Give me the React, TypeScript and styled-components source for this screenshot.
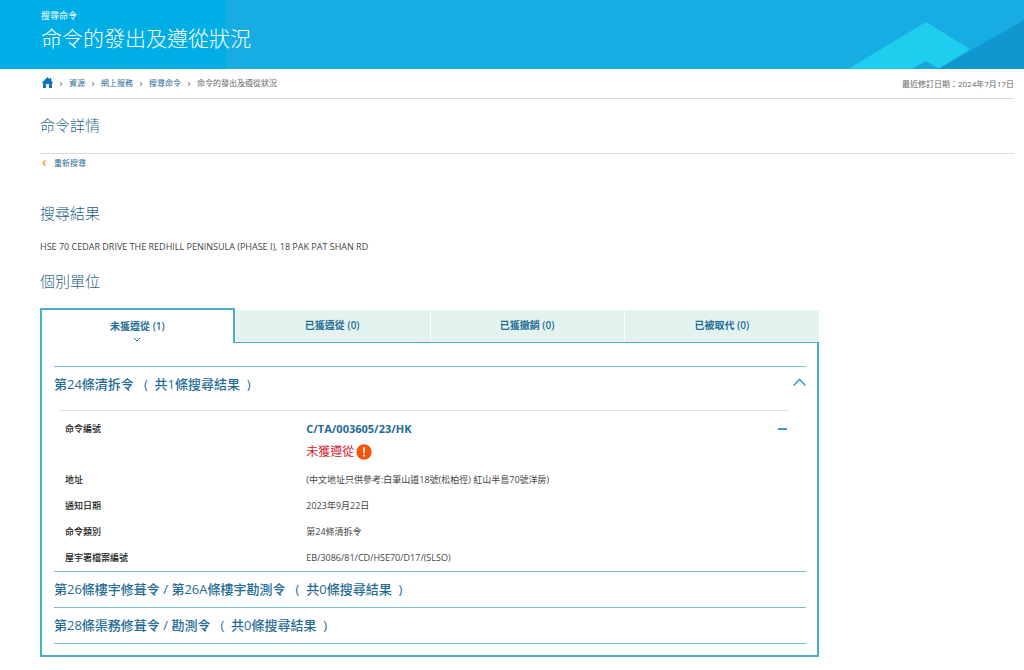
import React, { useState } from "react";
import styled, { createGlobalStyle } from "styled-components";

const latin = '"Open Sans", "Noto Sans CJK TC", sans-serif';

const c = {
  link: "#1f6c96",
  heading: "#1f6486",
  border: "#4aaec8",
  rule: "#d9d9d9",
  text: "#444444",
};

const GlobalStyle = createGlobalStyle`
  *, *::before, *::after { box-sizing: border-box; }
  body {
    margin: 0;
    background: #fff;
    color: ${c.text};
    font: 8px/14px ${latin};
  }
  h1, h2, h3, p, dl, dd, ol { margin: 0; padding: 0; font-weight: inherit; }
  a { color: ${c.link}; text-decoration: none; }
  button { border: 0; padding: 0; background: none; font: inherit; color: inherit; cursor: pointer; }
  svg { display: block; }
`;

const Banner = styled.header`
  position: relative;
  height: 69px;
  padding: 9px 0 0 41px;
  color: #fff;
  background: linear-gradient(90deg, #00aee6 226px, #17ade3 226px);
  overflow: hidden;
`;

const BannerArt = styled.svg`
  position: absolute;
  right: 0;
  bottom: 0;
`;

const Section = styled.p`
  position: relative;
  font-size: 9px;
  line-height: 14px;
`;

const Title = styled.h1`
  position: relative;
  font-size: 21px;
  line-height: 30px;
  font-weight: 300;
`;

const Main = styled.main`
  padding: 0 10px 14px 40px;
`;

const TopBar = styled.div`
  display: flex;
  align-items: center;
  justify-content: space-between;
  height: 30px;
  border-bottom: 1px solid ${c.rule};
`;

const Crumbs = styled.ol`
  display: flex;
  align-items: center;
  list-style: none;
  padding-bottom: 2px;
`;

const Crumb = styled.li`
  display: flex;
  align-items: center;
  color: #666;

  & + &::before {
    content: "›";
    width: 16px;
    font-size: 10px;
    text-align: center;
  }
`;

const HomeLink = styled.a`
  padding-left: 2px;
`;

const Revised = styled.p`
  color: #666;
`;

const PageHead = styled.div`
  display: flex;
  align-items: center;
  height: 55px;
  padding-bottom: 2px;
  border-bottom: 1px solid ${c.rule};
`;

const Heading = styled.h2`
  color: ${c.heading};
  font-size: 15px;
  line-height: 20px;
  font-weight: 300;
`;

const Back = styled.a`
  display: flex;
  align-items: center;
  gap: 8px;
  width: max-content;
  height: 17px;
  padding-left: 2px;
`;

const Results = styled.section`
  display: flex;
  flex-direction: column;
  gap: 17px;
  width: 80%;
  padding-top: 32px;
`;

const Address = styled.p`
  font-size: 9px;
`;

const TabList = styled.div`
  display: grid;
  grid-template-columns: repeat(4, 1fr);
  height: 35px;
`;

const Tab = styled.button<{ $active: boolean }>`
  display: flex;
  flex-direction: column;
  align-items: center;
  margin-top: ${(p) => (p.$active ? 0 : 2)}px;
  padding-top: ${(p) => (p.$active ? 9 : 8)}px;
  border: solid ${c.border};
  border-width: ${(p) => (p.$active ? "2px 2px 0" : "0 0 1px")};
  background: ${(p) => (p.$active ? "#fff" : "#e3f4f0")};
  color: ${c.link};
  font-size: 10px;
  line-height: 14px;
  font-weight: 600;

  & + & {
    box-shadow: ${(p) => (p.$active ? "none" : "inset 1px 0 #fff")};
  }
`;

const Panel = styled.div`
  padding: 23px 11px 11px 12px;
  border: solid ${c.border};
  border-width: 0 2px 2px;
`;

const Group = styled.section`
  border-top: 1px solid #7cbccf;

  &:last-child {
    border-bottom: 1px solid #7cbccf;
  }
`;

const GroupHead = styled.button`
  display: flex;
  align-items: center;
  justify-content: space-between;
  width: 100%;
  height: 35px;
  padding-bottom: 2px;
  color: ${c.link};
  font-size: 13px;
  line-height: 20px;
  font-weight: 500;
  text-align: left;
  white-space: pre;
`;

const Details = styled.dl`
  margin: 8px 17px 0 5px;
  border-top: 1px solid #e2e2e2;
`;

const Row = styled.div<{ $first?: boolean }>`
  display: grid;
  grid-template-columns: 33% 1fr auto;
  column-gap: 3px;
  align-items: start;
  padding: ${(p) => (p.$first ? "9px 2px 4px 6px" : "6px 2px 6px 6px")};
  font-size: 9px;
`;

const Label = styled.dt<{ $first?: boolean }>`
  padding-top: ${(p) => (p.$first ? 2 : 0)}px;
  color: #222;
  font-weight: 500;
`;

const OrderNo = styled.a`
  display: block;
  font-size: 11px;
  line-height: 18px;
  font-weight: 700;
`;

const Status = styled.p`
  display: flex;
  align-items: center;
  gap: 2px;
  padding-top: 3px;
  color: #d3202f;
  font-size: 12px;
  line-height: 22px;
`;

const Collapse = styled.button`
  display: flex;
  align-items: center;
  height: 18px;
`;

type Entry = { label: string; value: string };

const entries: Entry[] = [
  { label: "地址", value: "(中文地址只供參考:白筆山道18號(松柏徑) 紅山半島70號洋房)" },
  { label: "通知日期", value: "2023年9月22日" },
  { label: "命令類別", value: "第24條清拆令" },
  { label: "屋宇署檔案編號", value: "EB/3086/81/CD/HSE70/D17/(SLSO)" },
];

const tabs = ["未獲遵從 (1)", "已獲遵從 (0)", "已獲撤銷 (0)", "已被取代 (0)"];

export default function App() {
  const [active, setActive] = useState(0);
  const [open, setOpen] = useState(true);

  return (
    <>
      <GlobalStyle />
      <Banner>
        <BannerArt width="180" height="69" viewBox="0 0 180 69" aria-hidden="true">
          <path d="M4 69 82 22 126 49 95 69Z" fill="#1dceef" />
          <path d="M68 69 82 61 95 69Z" fill="#17a5dc" />
          <path d="M94 69 180 20V69Z" fill="#1097cf" />
        </BannerArt>
        <Section>搜尋命令</Section>
        <Title>命令的發出及遵從狀況</Title>
      </Banner>
      <Main>
        <TopBar>
          <nav aria-label="Breadcrumb">
            <Crumbs>
              <Crumb>
                <HomeLink href="#" aria-label="主頁">
                  <svg width="11" height="11" viewBox="0 0 11 11" fill="#0875bd">
                    <path d="M5.5 0 0 5.4 1 6.2V11H4V7H7V11H10V6.2L11 5.4 9.3 3.7V1H7.8V2.2Z" />
                  </svg>
                </HomeLink>
              </Crumb>
              <Crumb><a href="#">資源</a></Crumb>
              <Crumb><a href="#">網上服務</a></Crumb>
              <Crumb><a href="#">搜尋命令</a></Crumb>
              <Crumb aria-current="page">命令的發出及遵從狀況</Crumb>
            </Crumbs>
          </nav>
          <Revised>最近修訂日期：2024年7月17日</Revised>
        </TopBar>
        <PageHead>
          <Heading>命令詳情</Heading>
        </PageHead>
        <Back href="#">
          <svg width="4" height="6" viewBox="0 0 4 6" fill="none" stroke="#f0a02c" strokeWidth="1.5">
            <path d="M3.4 .5 1 3 3.4 5.5" />
          </svg>
          重新搜尋
        </Back>
        <Results>
          <Heading>搜尋結果</Heading>
          <Address>HSE 70 CEDAR DRIVE THE REDHILL PENINSULA (PHASE I), 18 PAK PAT SHAN RD</Address>
          <Heading>個別單位</Heading>
          <div>
            <TabList role="tablist">
              {tabs.map((name, i) => (
                <Tab key={name} role="tab" aria-selected={i === active} $active={i === active} onClick={() => setActive(i)}>
                  {name}
                  {i === active && (
                    <svg width="8" height="10" viewBox="0 0 8 10" fill="none" stroke={c.link}>
                      <path d="M1 5 4 8 7 5" />
                    </svg>
                  )}
                </Tab>
              ))}
            </TabList>
            <Panel role="tabpanel">
              <Group>
                <GroupHead aria-expanded={open} onClick={() => setOpen(!open)}>
                  {"第24條清拆令   (  共1條搜尋結果  )"}
                  <svg width="13" height="12" viewBox="0 0 13 12" fill="none" stroke="#4a9cc4" strokeWidth="1.6">
                    <path d={open ? "M.6 7.5 6.5 1.5 12.4 7.5" : "M.6 1.5 6.5 7.5 12.4 1.5"} />
                  </svg>
                </GroupHead>
                {open && (
                  <Details>
                    <Row $first>
                      <Label $first>命令編號</Label>
                      <dd>
                        <OrderNo href="#">C/TA/003605/23/HK</OrderNo>
                        <Status>
                          未獲遵從
                          <svg width="16" height="16" viewBox="0 0 16 16" aria-hidden="true">
                            <circle cx="8" cy="8" r="7.7" fill="#f7550b" />
                            <path d="M7 3.2H9L8.7 9.5H7.3ZM7.1 10.7H8.9V12.5H7.1Z" fill="#fff" />
                          </svg>
                        </Status>
                      </dd>
                      <Collapse aria-label="收起">
                        <svg width="9" height="3" viewBox="0 0 9 3"><path d="M0 0H9V2H0Z" fill="#3f98c8" /></svg>
                      </Collapse>
                    </Row>
                    {entries.map((e) => (
                      <Row key={e.label}>
                        <Label>{e.label}</Label>
                        <dd>{e.value}</dd>
                      </Row>
                    ))}
                  </Details>
                )}
              </Group>
              <Group>
                <GroupHead aria-expanded={false}>{"第26條樓宇修葺令 / 第26A條樓宇勘測令   (  共0條搜尋結果  )"}</GroupHead>
              </Group>
              <Group>
                <GroupHead aria-expanded={false}>{"第28條渠務修葺令 / 勘測令   (  共0條搜尋結果  )"}</GroupHead>
              </Group>
            </Panel>
          </div>
        </Results>
      </Main>
    </>
  );
}
